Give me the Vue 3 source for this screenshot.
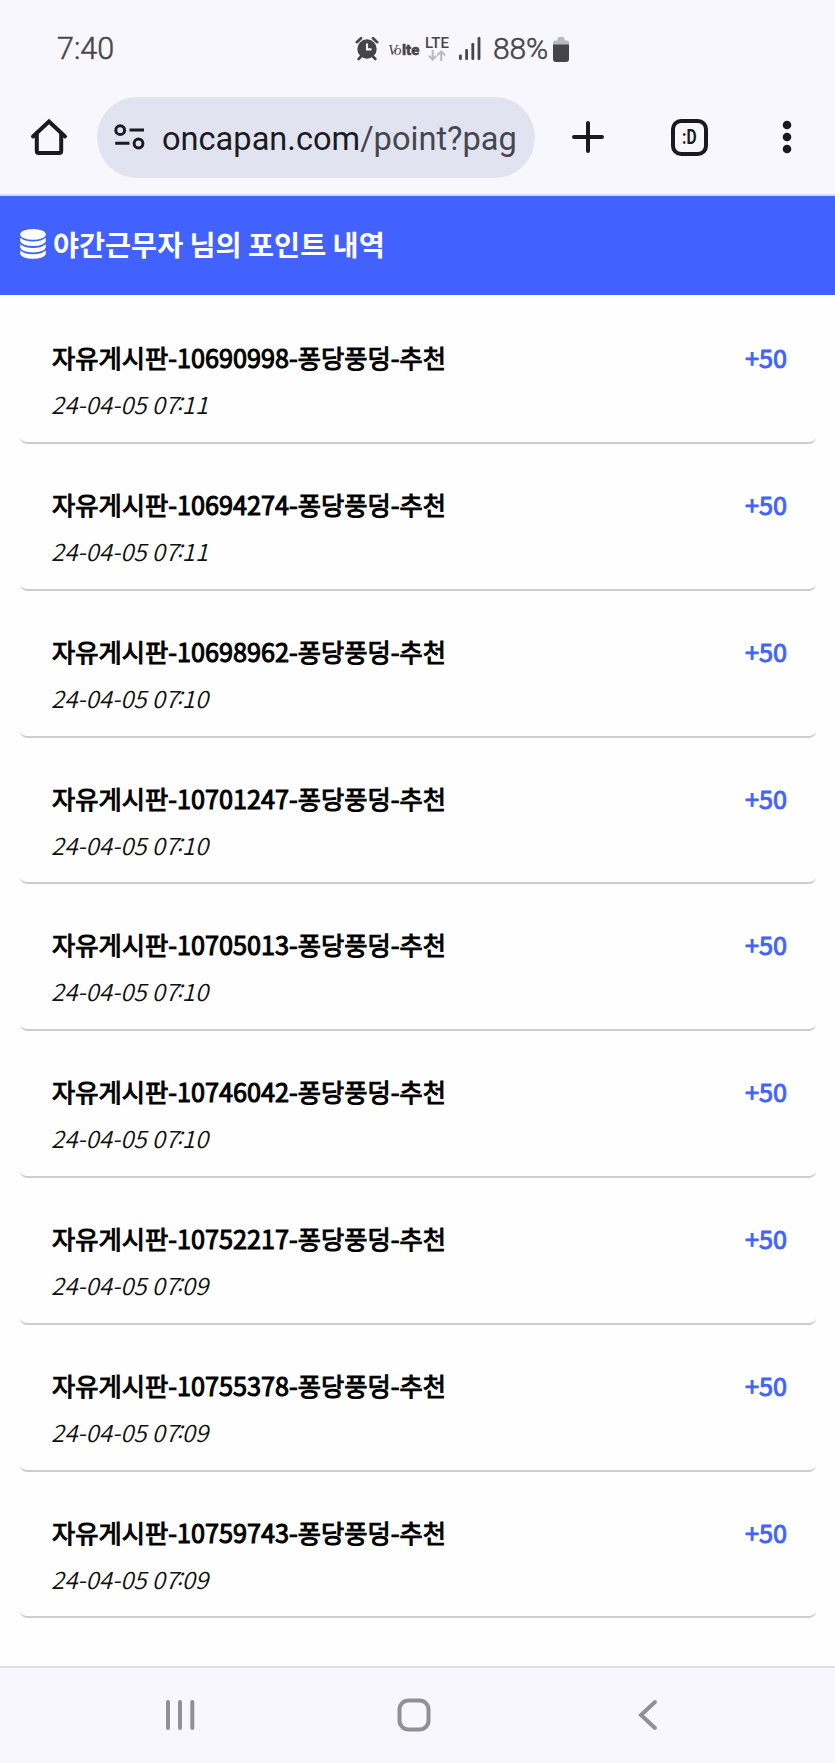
<template>
  <div class="screen">
    <header class="browser">
      <div class="status-bar">
        <span class="clock">7:40</span>
        <div class="status-icons">
          <svg class="alarm" width="24" height="25" viewBox="0 0 24 25">
            <circle cx="12" cy="13" r="9.7" fill="#464648" />
            <path d="M1.8 6.2 6 2.2M22.2 6.2 18 2.2" stroke="#464648" stroke-width="2.6" stroke-linecap="round" />
            <path d="M6 20.5 3.6 23M18 20.5 20.4 23" stroke="#464648" stroke-width="2.6" stroke-linecap="round" />
            <path d="M12 7.4V13.4H16.5" fill="none" stroke="#f8f7fe" stroke-width="2.1" />
          </svg>
          <span class="volte"><i>Vo</i><b>lte</b></span>
          <div class="lte">
            <span>LTE</span>
            <svg width="18" height="11" viewBox="0 0 18 11" fill="none" stroke="#b9b9c0" stroke-width="2">
              <path d="M4.7 0V9.5M.8 5.6 4.7 9.5 8.6 5.6" />
              <path d="M13.2 11V1.5M9.3 5.4 13.2 1.5 17.1 5.4" />
            </svg>
          </div>
          <svg class="signal" width="23" height="24" viewBox="0 0 23 24" fill="#464648">
            <rect x="0" y="17.5" width="2.8" height="5.5" rx="1.2" />
            <rect x="6.2" y="12" width="2.8" height="11" rx="1.2" />
            <rect x="12.4" y="6" width="2.8" height="17" rx="1.2" />
            <rect x="18.6" y="0" width="2.8" height="23" rx="1.2" />
          </svg>
          <span class="percent">88%</span>
          <svg class="battery" width="16" height="26" viewBox="0 0 16 26">
            <path d="M0 8V5.5Q0 3.5 2 3.5H4.5V1.5Q4.5 0 6 0H10Q11.5 0 11.5 1.5V3.5H14Q16 3.5 16 5.5V8Z" fill="#b9b9c0" />
            <path d="M0 7.5H16V22Q16 25 13 25H3Q0 25 0 22Z" fill="#464648" />
          </svg>
        </div>
      </div>

      <div class="toolbar">
        <svg class="home" width="38" height="38" viewBox="0 0 38 38" fill="none" stroke="#1b1b1f" stroke-width="4" stroke-linecap="round" stroke-linejoin="round">
          <path d="M3 18.5 19 3.5 35 18.5" stroke-linejoin="miter" />
          <path d="M6.8 15.5V33Q6.8 35 8.8 35H29.2Q31.2 35 31.2 33V15.5" />
        </svg>
        <div class="address">
          <svg class="tune" width="31" height="26" viewBox="0 0 31 26" fill="none" stroke="#1b1b1f" stroke-width="3">
            <circle cx="6.2" cy="6.2" r="4.4" />
            <path d="M15.5 6H30M1.2 19.3H15.5" />
            <circle cx="24.5" cy="19.5" r="4.4" />
          </svg>
          <div class="url">oncapan.com<span>/point?pag</span></div>
        </div>
        <svg class="plus" width="32" height="32" viewBox="0 0 32 32" stroke="#1b1b1f" stroke-width="4" stroke-linecap="round">
          <path d="M16 2V30M2 16H30" />
        </svg>
        <div class="tabs"><span>:D</span></div>
        <svg class="more" width="10" height="34" viewBox="0 0 10 34" fill="#1b1b1f">
          <circle cx="5" cy="5" r="4.3" />
          <circle cx="5" cy="17" r="4.3" />
          <circle cx="5" cy="29" r="4.3" />
        </svg>
      </div>
    </header>

    <main class="content">
      <h1 class="title">
        <svg width="26" height="30" viewBox="0 0 26 30" fill="#fff">
          <ellipse cx="13" cy="5.4" rx="12.8" ry="5.4" />
          <path d="M.2 8.8Q4 12.5 13 12.5T25.8 8.8V12.2Q24 17 13 17T.2 12.2Z" />
          <path d="M.2 15.2Q4 18.9 13 18.9T25.8 15.2V18.6Q24 23.4 13 23.4T.2 18.6Z" />
          <path d="M.2 21.6Q4 25.3 13 25.3T25.8 21.6V25Q24 29.8 13 29.8T.2 25Z" />
        </svg>
        <span>야간근무자 님의 포인트 내역</span>
      </h1>

      <ul class="list">
        <li v-for="item in items" :key="item.id" class="item">
          <div class="info">
            <div class="subject">자유게시판-{{ item.id }}-퐁당풍덩-추천</div>
            <div class="date">24-04-05 {{ item.hour }}<span class="colon">:</span>{{ item.minute }}</div>
          </div>
          <div class="point">+50</div>
        </li>
      </ul>
    </main>

    <nav class="nav-bar">
      <svg width="30" height="32" viewBox="0 0 30 32" stroke="#919195" stroke-width="4" stroke-linecap="round">
        <path d="M3 3V29M15 3V29M27.3 3V29" />
      </svg>
      <svg class="nav-home" width="34" height="34" viewBox="0 0 34 34" fill="none" stroke="#919195" stroke-width="4">
        <rect x="2.5" y="2.5" width="29" height="29" rx="9" />
      </svg>
      <svg class="nav-back" width="20" height="32" viewBox="0 0 20 32" fill="none" stroke="#919195" stroke-width="4" stroke-linecap="round">
        <path d="M17 3 3 16 17 29" />
      </svg>
    </nav>
  </div>
</template>

<script setup>
import { ref } from 'vue'

const items = ref([
  { id: 10690998, hour: '07', minute: '11' },
  { id: 10694274, hour: '07', minute: '11' },
  { id: 10698962, hour: '07', minute: '10' },
  { id: 10701247, hour: '07', minute: '10' },
  { id: 10705013, hour: '07', minute: '10' },
  { id: 10746042, hour: '07', minute: '10' },
  { id: 10752217, hour: '07', minute: '09' },
  { id: 10755378, hour: '07', minute: '09' },
  { id: 10759743, hour: '07', minute: '09' }
])
</script>

<style>
body {
  margin: 0;
  background: #fefefe;
}
</style>

<style scoped>
.screen {
  display: flex;
  flex-direction: column;
  width: 835px;
  height: 1763px;
  overflow: hidden;
  background: #fefefe;
  font-family: "Noto Sans CJK KR", sans-serif;
}

.screen svg {
  display: block;
  flex: none;
}

.browser {
  flex: none;
  box-sizing: border-box;
  height: 196px;
  border-bottom: 2px solid #dcdce9;
  background: #f8f7fe;
  font-family: Roboto, sans-serif;
}

.status-bar {
  display: flex;
  align-items: center;
  height: 97px;
  padding-left: 56px;
  color: #464648;
}

.clock {
  width: 299px;
  font-size: 30.5px;
  line-height: 36px;
  font-weight: 300;
  text-indent: 1px;
  -webkit-text-stroke: 0.5px #464648;
}

.status-icons {
  display: flex;
  align-items: center;
  height: 40px;
}

.volte {
  display: flex;
  align-items: baseline;
  width: 34px;
  margin-top: 3px;
  margin-left: 9px;
  line-height: 20px;
}

.volte i {
  width: 14px;
  font-family: "Liberation Serif", serif;
  font-size: 15px;
  letter-spacing: -1.5px;
}

.volte b {
  font-size: 15px;
  font-weight: 900;
  -webkit-text-stroke: 0.4px #464648;
}

.lte {
  display: flex;
  flex-direction: column;
  align-items: center;
  width: 24px;
  margin-left: 3px;
  font-size: 15px;
  line-height: 14px;
  font-weight: 500;
}

.signal {
  margin-left: 10px;
}

.percent {
  width: 56px;
  margin-left: 11px;
  font-size: 30px;
  line-height: 36px;
  font-weight: 300;
  letter-spacing: -0.2px;
  -webkit-text-stroke: 0.5px #464648;
}

.battery {
  margin-top: 2px;
  margin-left: 4px;
}

.toolbar {
  display: flex;
  align-items: center;
  height: 80px;
  padding-left: 30px;
}

.address {
  display: flex;
  align-items: center;
  box-sizing: border-box;
  width: 438px;
  height: 81px;
  margin-left: 29px;
  padding-left: 17px;
  border-radius: 41px;
  background: #e1e3f1;
}

.url {
  margin-left: 17px;
  padding-top: 4px;
  font-size: 32.6px;
  line-height: 40px;
  white-space: nowrap;
  color: #1b1b1f;
}

.url span {
  color: #46464f;
}

.plus {
  margin-left: 37px;
}

.tabs {
  display: flex;
  align-items: center;
  justify-content: center;
  box-sizing: border-box;
  width: 37px;
  height: 37px;
  margin-left: 67px;
  border: 4px solid #1b1b1f;
  border-radius: 10px;
  font-size: 20px;
  line-height: 20px;
  font-weight: 700;
  color: #1b1b1f;
}

.tabs span {
  transform: scaleX(0.78);
}

.more {
  margin-left: 74px;
}

.content {
  flex: 1;
  min-height: 0;
}

.title {
  display: flex;
  align-items: center;
  box-sizing: border-box;
  height: 99px;
  margin: 0;
  padding: 0 0 3px 20px;
  background: #4262ff;
  color: #fff;
  font-size: 28.3px;
  font-weight: 700;
  line-height: 40px;
  white-space: nowrap;
}

.title span {
  margin-left: 7px;
}

.list {
  margin: 0;
  padding: 2.2px 19px 0 20px;
  list-style: none;
}

.item {
  display: flex;
  justify-content: space-between;
  box-sizing: border-box;
  height: 146.8px;
  padding: 39px 29px 0 32px;
  border-bottom: 2px solid #cdcdcd;
  border-radius: 7px;
}

.subject,
.point {
  height: 42px;
  font-size: 25.25px;
  line-height: 42px;
  font-weight: 400;
  white-space: nowrap;
}

.subject {
  color: #000;
  -webkit-text-stroke: 1px #000;
}

.date {
  margin-top: 5px;
  margin-left: -1px;
  font-size: 24px;
  line-height: 41px;
  font-style: italic;
  font-weight: 350;
  color: #111;
}

.colon {
  position: relative;
  top: -4px;
  margin: 0 -1.5px;
}

.point {
  color: #4262ff;
  -webkit-text-stroke: 0.9px #4262ff;
}

.nav-bar {
  display: flex;
  flex: none;
  align-items: center;
  box-sizing: border-box;
  height: 97px;
  padding: 0 0 2px 165px;
  border-top: 2px solid #dfdfec;
  background: #f8f7fe;
}

.nav-home {
  margin-left: 202px;
}

.nav-back {
  margin-left: 207px;
}
</style>
